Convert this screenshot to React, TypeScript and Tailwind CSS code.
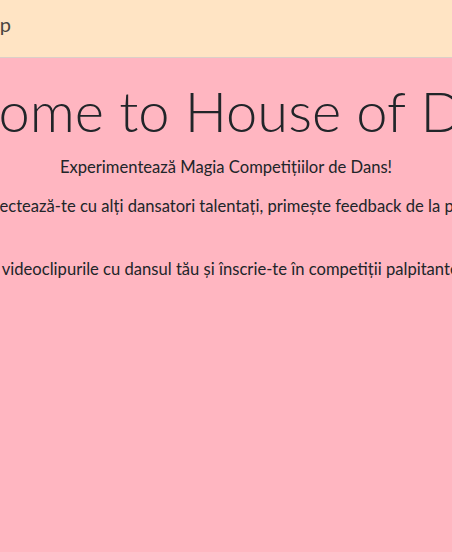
import React from "react";

const font = { fontFamily: "Lato, 'Open Sans', sans-serif" };

export default function App() {
  return (
    <div className="min-h-screen flex flex-col bg-[#ffb6c1] overflow-hidden" style={font}>
      {/* top bar: brand overflows to the left, only its last letter shows */}
      <header className="h-[58px] shrink-0 bg-[#ffe4c4] border-b border-[#dccfc8] flex items-start justify-end pt-[9px]">
        <span className="shrink-0 mr-[441px] text-[20px] leading-[1.5] text-[#4a4540] whitespace-nowrap">
          Dance Competition App
        </span>
      </header>

      <main className="flex flex-col items-center text-[#212529]">
        <h1 className="mt-[19px] text-[56px] font-light leading-[1.2] whitespace-nowrap">
          Welcome to House of Dance
        </h1>
        <p className="mt-[11px] text-[16.6px] leading-[1.5] whitespace-nowrap">
          Experimentează Magia Competițiilor de Dans!
        </p>
        <p className="mt-[14px] text-[16.6px] leading-[1.5] whitespace-nowrap">
          Conectează-te cu alți dansatori talentați, primește feedback de la profi.
        </p>
        <p className="mt-[38px] text-[16.6px] leading-[1.5] whitespace-nowrap">
          Încarcă videoclipurile cu dansul tău și înscrie-te în competiții palpitante acum.
        </p>
      </main>
    </div>
  );
}
